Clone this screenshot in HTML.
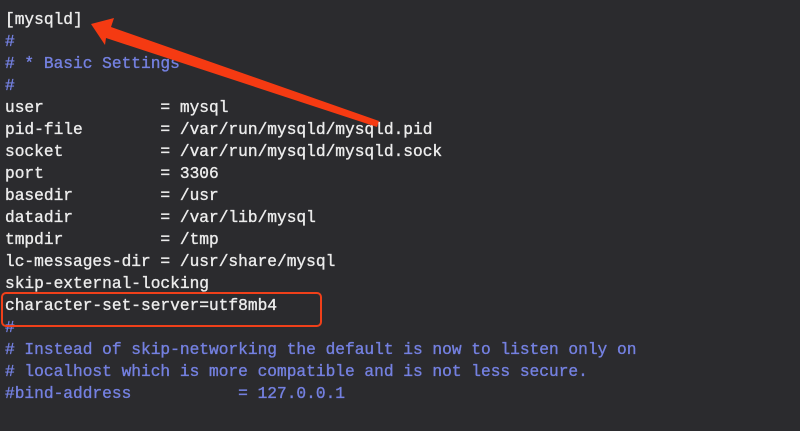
<!DOCTYPE html>
<html><head><meta charset="utf-8"><style>
html,body{margin:0;padding:0;}
body{width:800px;height:431px;background:#2b2b2e;overflow:hidden;position:relative;}
pre{position:absolute;left:5px;top:9px;margin:0;font-family:"Liberation Mono",monospace;font-size:16.2px;line-height:22px;color:#ececec;-webkit-text-stroke:0.35px currentColor;}
.c{color:#7480e0;}
svg{position:absolute;left:0;top:0;}
</style></head><body>
<pre>[mysqld]
<span class="c">#</span>
<span class="c"># * Basic Settings</span>
<span class="c">#</span>
user            = mysql
pid-file        = /var/run/mysqld/mysqld.pid
socket          = /var/run/mysqld/mysqld.sock
port            = 3306
basedir         = /usr
datadir         = /var/lib/mysql
tmpdir          = /tmp
lc-messages-dir = /usr/share/mysql
skip-external-locking
character-set-server=utf8mb4
<span class="c">#</span>
<span class="c"># Instead of skip-networking the default is now to listen only on</span>
<span class="c"># localhost which is more compatible and is not less secure.</span>
<span class="c">#bind-address           = 127.0.0.1</span></pre>
<svg width="800" height="431">
<polygon points="91,24 114,18 111,27 379,121 377,127 106,38 105,45" fill="#f53a12"/>
<rect x="2" y="293" width="319" height="33" rx="4" fill="none" stroke="#f0401a" stroke-width="2"/>
</svg>
</body></html>
